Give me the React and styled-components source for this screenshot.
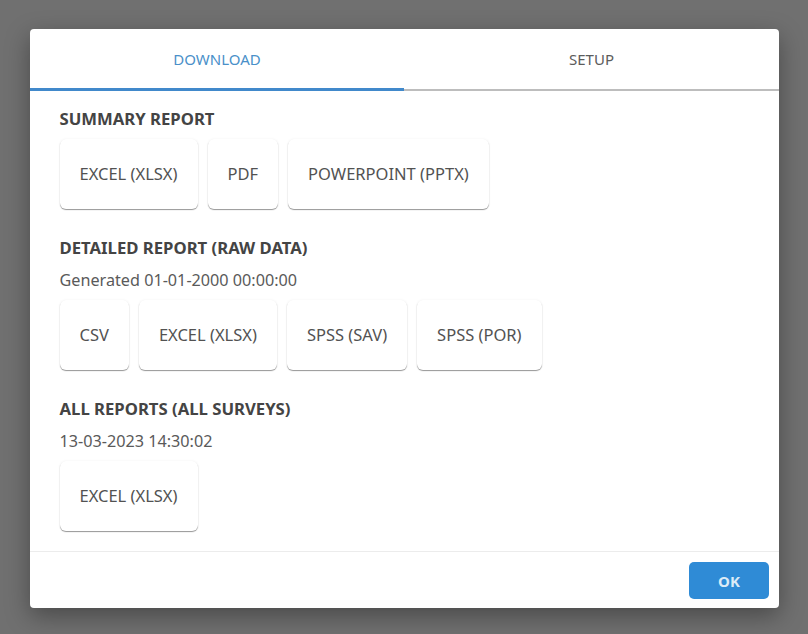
import React from 'react'
import styled, { createGlobalStyle } from 'styled-components'

const GlobalStyle = createGlobalStyle`
  html, body {
    margin: 0;
    height: 100%;
  }
  body {
    font-family: "Noto Sans", "Open Sans", sans-serif;
    background: #707070;
  }
`

const Backdrop = styled.div`
  width: 808px;
  height: 634px;
  box-sizing: border-box;
  padding: 29px 29px 26px 30px;
  background: #707070;
  overflow: hidden;
`

const Dialog = styled.div`
  height: 579px;
  display: flex;
  flex-direction: column;
  background: #fff;
  border-radius: 4px;
  box-shadow: 0 8px 24px rgba(0, 0, 0, 0.35);
`

const Tabs = styled.div`
  display: grid;
  grid-template-columns: 374px 375px;
  height: 62px;
  flex: none;
`

const Tab = styled.div`
  display: flex;
  align-items: center;
  justify-content: center;
  box-sizing: border-box;
  font-size: 15px;
  color: ${(p) => (p.$active ? '#4a90c9' : '#5c5c5c')};
  border-bottom: ${(p) => (p.$active ? '3px solid #4189cb' : '2px solid #bdbdbd')};
`

const Body = styled.div`
  flex: 1;
  padding: 18px 30px 0 29.5px;
`

const Section = styled.section`
  margin-bottom: 29px;

  &:last-child {
    margin-bottom: 0;
  }
`

const Heading = styled.h3`
  margin: 0;
  font-size: 16.7px;
  line-height: 20px;
  font-weight: 700;
  color: #444;
`

const Note = styled.p`
  margin: 12px 0 0;
  font-size: 16.2px;
  line-height: 20px;
  color: #5a5a5a;
`

const Buttons = styled.div`
  display: flex;
  gap: 10px;
  margin-top: 10px;
`

const FileButton = styled.button`
  height: 70px;
  padding: 0 20px 1px;
  border: none;
  border-radius: 6px;
  background: #fff;
  font-family: inherit;
  font-size: 16.5px;
  color: #525252;
  box-shadow: 0 1px 1px rgba(0, 0, 0, 0.4), 0 0 3px rgba(0, 0, 0, 0.05);
`

const Footer = styled.div`
  flex: none;
  height: 57px;
  box-sizing: border-box;
  display: flex;
  align-items: flex-start;
  justify-content: flex-end;
  padding: 10px 10px 0 0;
  border-top: 1px solid #ececec;
`

const OkButton = styled.button`
  width: 80px;
  height: 37px;
  border: none;
  border-radius: 5px;
  background: #2f8bd6;
  color: #dcebf7;
  font-family: inherit;
  font-size: 15px;
  font-weight: 700;
`

const sections = [
  { title: 'SUMMARY REPORT', files: ['EXCEL (XLSX)', 'PDF', 'POWERPOINT (PPTX)'] },
  {
    title: 'DETAILED REPORT (RAW DATA)',
    note: 'Generated 01-01-2000 00:00:00',
    files: ['CSV', 'EXCEL (XLSX)', 'SPSS (SAV)', 'SPSS (POR)'],
  },
  {
    title: 'ALL REPORTS (ALL SURVEYS)',
    note: '13-03-2023 14:30:02',
    files: ['EXCEL (XLSX)'],
  },
]

const App = () => {
  return (
    <>
      <GlobalStyle />
      <Backdrop>
        <Dialog>
          <Tabs>
            <Tab $active>DOWNLOAD</Tab>
            <Tab>SETUP</Tab>
          </Tabs>
          <Body>
            {sections.map((section) => (
              <Section key={section.title}>
                <Heading>{section.title}</Heading>
                {section.note && <Note>{section.note}</Note>}
                <Buttons>
                  {section.files.map((file) => (
                    <FileButton key={file}>{file}</FileButton>
                  ))}
                </Buttons>
              </Section>
            ))}
          </Body>
          <Footer>
            <OkButton>OK</OkButton>
          </Footer>
        </Dialog>
      </Backdrop>
    </>
  )
}

export default App
